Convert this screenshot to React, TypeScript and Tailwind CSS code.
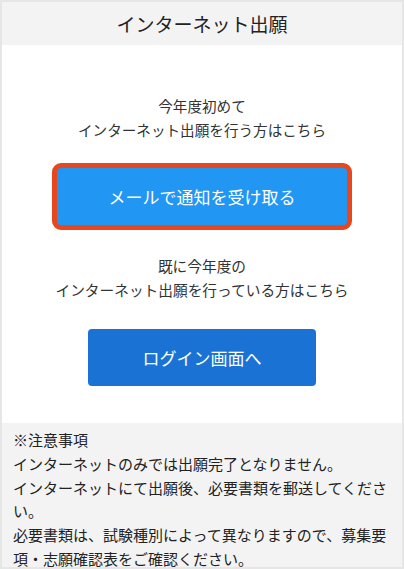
export default function App() {
  return (
    <div
      className="h-[569px] w-[404px] overflow-hidden border-2 border-[#e6e6e6] bg-white text-[#333]"
      style={{ fontFamily: '"Noto Sans CJK JP", "Noto Sans", sans-serif' }}
    >
      <div className="flex h-[43px] items-center justify-center bg-[#f3f3f3] text-[19px] leading-none text-[#222]">
        インターネット出願
      </div>
      <div className="flex flex-col items-center pt-[49px] pb-[37px]">
        <p className="text-center text-[14.6px] leading-[24px]">
          今年度初めて
          <br />
          インターネット出願を行う方はこちら
        </p>
        <button className="mt-[21px] flex h-[67px] w-[300px] items-center justify-center rounded-[9px] border-[5px] border-[#e8461c] bg-[#2196f3] text-[17px] text-white">
          メールで通知を受け取る
        </button>
        <p className="mt-[24px] text-center text-[14.7px] leading-[24px]">
          既に今年度の
          <br />
          インターネット出願を行っている方はこちら
        </p>
        <button className="mt-[27px] flex h-[57px] w-[228px] items-center justify-center rounded-[4px] bg-[#1a73d4] text-[17px] text-white">
          ログイン画面へ
        </button>
      </div>
      <div className="h-full bg-[#f3f3f3] px-[11px] pt-[5px] text-[15px] leading-[23.8px] text-[#222]">
        <p>※注意事項</p>
        <p>インターネットのみでは出願完了となりません。</p>
        <p>インターネットにて出願後、必要書類を郵送してください。</p>
        <p>必要書類は、試験種別によって異なりますので、募集要項・志願確認表をご確認ください。</p>
      </div>
    </div>
  );
}
